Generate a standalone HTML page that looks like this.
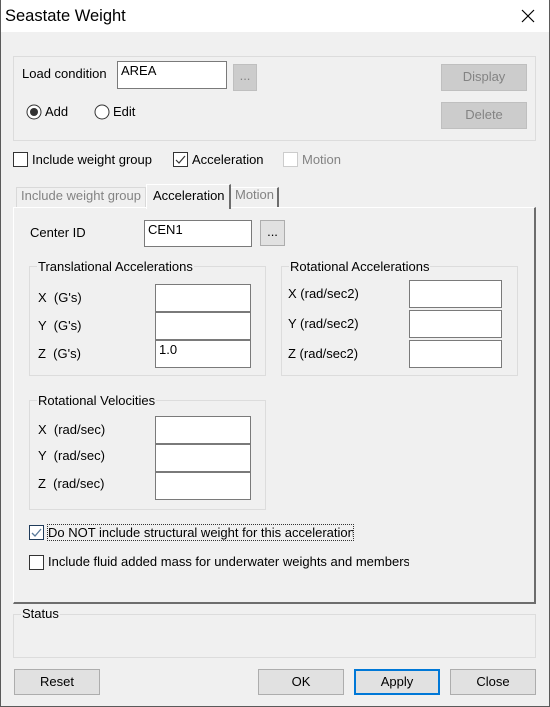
<!DOCTYPE html>
<html><head><meta charset="utf-8"><style>
*{margin:0;padding:0;box-sizing:border-box}
body{width:550px;height:707px;background:#f0f0f0;font-family:"Liberation Sans","Noto Sans CJK SC",sans-serif;font-size:13px;color:#000;position:relative;overflow:hidden}
.a{position:absolute;white-space:nowrap}
.frame{position:absolute;left:0;top:0;width:550px;height:707px;border:1px solid #5a5a5a;border-top:none}
.title{position:absolute;left:1px;top:0;width:548px;height:32px;background:#fff}
.gb{position:absolute;border:1px solid #dcdcdc}
.gt{position:absolute;background:#f0f0f0;padding:0 1px;line-height:14px}
.in{position:absolute;background:#fff;border:1px solid #7a7a7a;padding:2px 3px;line-height:14px}
.btn{position:absolute;background:#e1e1e1;border:1px solid #adadad;text-align:center;line-height:24px}
.dis{background:#cccccc;border-color:#bfbfbf;color:#838383}
.cb{position:absolute;width:15px;height:15px;background:#fff;border:1px solid #333}
.lbl{position:absolute;white-space:nowrap;line-height:14px}
</style></head><body>
<div class="title"></div>
<div class="a" style="left:5px;top:7px;font-size:16.5px">Seastate Weight</div>
<svg class="a" style="left:521px;top:9px" width="14" height="14"><path d="M1 1L13 13M13 1L1 13" stroke="#000" stroke-width="1.2"/></svg>

<div class="gb" style="left:13px;top:56px;width:523px;height:85px"></div>
<div class="lbl" style="left:22px;top:67px">Load condition</div>
<div class="in" style="left:117px;top:61px;width:110px;height:28px">AREA</div>
<div class="btn dis" style="left:233px;top:64px;width:24px;height:27px;line-height:22px">...</div>
<div class="btn dis" style="left:441px;top:64px;width:86px;height:27px">Display</div>
<div class="btn dis" style="left:441px;top:102px;width:86px;height:27px">Delete</div>
<svg class="a" style="left:26px;top:104px" width="16" height="16"><circle cx="8" cy="8" r="7" fill="#fff" stroke="#333"/><circle cx="8" cy="8" r="4" fill="#333"/></svg>
<div class="lbl" style="left:45px;top:105px">Add</div>
<svg class="a" style="left:94px;top:104px" width="16" height="16"><circle cx="8" cy="8" r="7" fill="#fff" stroke="#333"/></svg>
<div class="lbl" style="left:113px;top:105px">Edit</div>

<div class="cb" style="left:13px;top:152px"></div>
<div class="lbl" style="left:32px;top:153px">Include weight group</div>
<div class="cb" style="left:173px;top:152px"><svg width="13" height="13" style="position:absolute;left:0;top:0"><path d="M2 7L5 10L11 3" stroke="#333" fill="none" stroke-width="1.2"/></svg></div>
<div class="lbl" style="left:192px;top:153px">Acceleration</div>
<div class="cb" style="left:283px;top:152px;border-color:#ccc"></div>
<div class="lbl" style="left:302px;top:153px;color:#838383">Motion</div>

<!-- tabs -->
<div class="a" style="left:16px;top:187px;width:130px;height:21px;border:1px solid #d9d9d9;border-bottom:none;background:#f0f0f0"></div>
<div class="lbl" style="left:21px;top:189px;color:#838383">Include weight group</div>
<div class="a" style="left:13px;top:207px;width:523px;height:397px;border-top:1px solid #fff;border-left:1px solid #fff;border-right:2px solid #6d6d6d;border-bottom:2px solid #6d6d6d"></div>
<div class="a" style="left:146px;top:184px;width:85px;height:25px;border-top:1px solid #fff;border-left:1px solid #fff;border-right:2px solid #6d6d6d;background:#f0f0f0"></div>
<div class="lbl" style="left:153px;top:189px">Acceleration</div>
<div class="a" style="left:231px;top:187px;width:48px;height:20px;border-right:2px solid #6d6d6d;border-top:1px solid #fff"></div>
<div class="lbl" style="left:235px;top:188px;color:#838383">Motion</div>

<div class="lbl" style="left:30px;top:226px">Center ID</div>
<div class="in" style="left:144px;top:220px;width:108px;height:27px">CEN1</div>
<div class="btn" style="left:260px;top:220px;width:25px;height:26px;line-height:22px">...</div>

<div class="gb" style="left:29px;top:266px;width:237px;height:110px"></div>
<div class="gt" style="left:37px;top:260px">Translational Accelerations</div>
<div class="lbl" style="left:38px;top:291px">X &nbsp;(G's)</div>
<div class="lbl" style="left:38px;top:319px">Y &nbsp;(G's)</div>
<div class="lbl" style="left:38px;top:347px">Z &nbsp;(G's)</div>
<div class="in" style="left:155px;top:284px;width:96px;height:28px"></div>
<div class="in" style="left:155px;top:312px;width:96px;height:28px"></div>
<div class="in" style="left:155px;top:340px;width:96px;height:28px">1.0</div>

<div class="gb" style="left:281px;top:266px;width:237px;height:110px"></div>
<div class="gt" style="left:289px;top:260px">Rotational Accelerations</div>
<div class="lbl" style="left:288px;top:287px">X (rad/sec2)</div>
<div class="lbl" style="left:288px;top:317px">Y (rad/sec2)</div>
<div class="lbl" style="left:288px;top:347px">Z (rad/sec2)</div>
<div class="in" style="left:409px;top:280px;width:93px;height:28px"></div>
<div class="in" style="left:409px;top:310px;width:93px;height:28px"></div>
<div class="in" style="left:409px;top:340px;width:93px;height:28px"></div>

<div class="gb" style="left:29px;top:400px;width:237px;height:110px"></div>
<div class="gt" style="left:37px;top:394px">Rotational Velocities</div>
<div class="lbl" style="left:38px;top:423px">X &nbsp;(rad/sec)</div>
<div class="lbl" style="left:38px;top:449px">Y &nbsp;(rad/sec)</div>
<div class="lbl" style="left:38px;top:477px">Z &nbsp;(rad/sec)</div>
<div class="in" style="left:155px;top:416px;width:96px;height:28px"></div>
<div class="in" style="left:155px;top:444px;width:96px;height:28px"></div>
<div class="in" style="left:155px;top:472px;width:96px;height:28px"></div>

<div class="cb" style="left:29px;top:525px;border-color:#1f3b5a"><svg width="13" height="13" style="position:absolute;left:0;top:0"><path d="M2 7L5 10L11 3" stroke="#5a7a9a" fill="none" stroke-width="1.3"/></svg></div>
<div class="lbl" style="left:47px;top:524px;height:17px;width:307px;border:1px dotted #333;padding:1px 0 0 0;overflow:hidden">Do NOT include structural weight for this acceleration</div>
<div class="cb" style="left:29px;top:555px"></div>
<div class="a" style="left:48px;top:555px;width:361px;overflow:hidden;line-height:14px">Include fluid added mass for underwater weights and members</div>

<div class="gb" style="left:13px;top:614px;width:523px;height:44px"></div>
<div class="gt" style="left:21px;top:607px">Status</div>

<div class="btn" style="left:14px;top:669px;width:86px;height:26px">Reset</div>
<div class="btn" style="left:258px;top:669px;width:86px;height:26px">OK</div>
<div class="btn" style="left:354px;top:669px;width:86px;height:26px;border:2px solid #0078d7;line-height:22px">Apply</div>
<div class="btn" style="left:450px;top:669px;width:86px;height:26px">Close</div>
<div class="frame"></div>
</body></html>
